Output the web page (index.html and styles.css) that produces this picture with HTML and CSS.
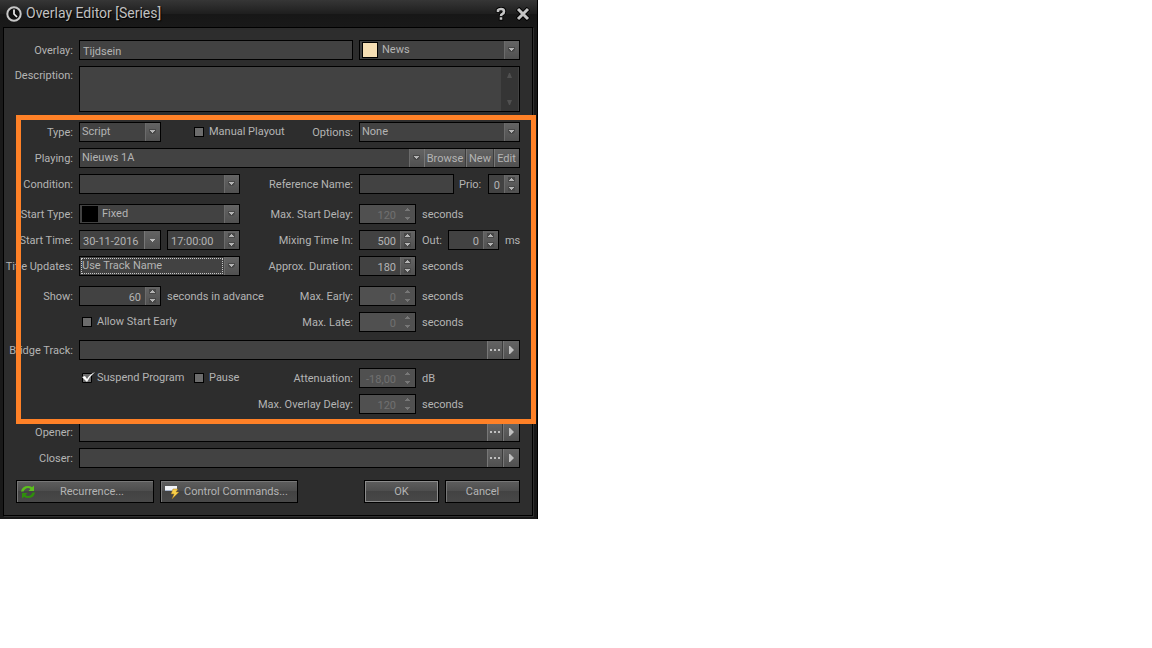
FILE: index.html
```html
<!DOCTYPE html>
<html lang="en">
<head>
  <meta charset="UTF-8">
  <meta name="viewport" content="width=device-width, initial-scale=1.0">
  <title>Overlay Editor</title>
  <link rel="stylesheet" href="styles.css">
</head>
<body>

  <!-- Shared arrow shapes -->
  <svg class="defs" width="0" height="0">
    <symbol id="up" viewBox="0 0 5 3"><path d="M2 0h1v1h1v1h1v1H0V2h1V1h1z"/></symbol>
    <symbol id="down" viewBox="0 0 5 3"><path d="M0 0h5v1H4v1H3v1H2V2H1V1H0z"/></symbol>
    <symbol id="play" viewBox="0 0 5 8"><path d="M0 0h1l4 4-4 4H0z"/></symbol>
    <symbol id="dots" viewBox="0 0 10 2"><path d="M0 0h2v2H0zM4 0h2v2H4zM8 0h2v2H8z"/></symbol>
  </svg>

  <main class="dialog">
    <header class="titlebar">
      <svg class="clock" viewBox="0 0 16 16">
        <circle cx="8" cy="8" r="6.7" fill="#101010" stroke="#c8c8c8" stroke-width="2"/>
        <path d="M8 3.500V8l3 3" fill="none" stroke="#eee" stroke-width="1.700"/>
      </svg>
      <h1>Overlay Editor [Series]</h1>
      <button type="button" class="title-btn" aria-label="Help">
        <svg width="12" height="14" viewBox="0 0 12 14">
          <path d="M3 5.500V3.200Q4 2 6 2q3 0 3 2.400 0 1.500-1.600 2.400Q6 7.500 6 9M6 10v3.500" fill="none" stroke="#000" stroke-width="4.500"/>
          <path d="M3 5V3.200Q4 2 6 2q3 0 3 2.400 0 1.500-1.600 2.400Q6 7.500 6 9M6 10.300v2.500" fill="none" stroke="#c4c4c4" stroke-width="2.600"/>
        </svg>
      </button>
      <button type="button" class="title-btn" aria-label="Close">
        <svg width="14" height="14" viewBox="0 0 14 14">
          <path d="M1.500 1.500l11 11M12.500 1.500l-11 11" stroke="#000" stroke-width="5"/>
          <path d="M2 2l10 10M12 2l-10 10" stroke="#c4c4c4" stroke-width="3"/>
        </svg>
      </button>
    </header>

    <form class="panel">
      <!-- General -->
      <div class="row">
        <label for="overlay">Overlay:</label>
        <input class="box wide" id="overlay" type="text" value="Tijdsein">
        <span class="box combo">
          <i class="swatch news"></i>
          <select aria-label="Category"><option>News</option></select>
        </span>
      </div>
      <div class="row tall">
        <label for="description">Description:</label>
        <div class="box memo full">
          <textarea id="description"></textarea>
          <span class="scroll">
            <svg width="5" height="5" viewBox="0 0 5 5"><path d="M2 0h1l2 5H0z"/></svg>
            <svg width="5" height="5" viewBox="0 0 5 5"><path d="M0 0h5L3 5H2z"/></svg>
          </span>
        </div>
      </div>

      <!-- Playout settings -->
      <section class="settings">
        <div class="row">
          <label for="type">Type:</label>
          <div class="group wide">
            <span class="box combo short"><select id="type"><option>Script</option></select></span>
            <label class="check second"><input type="checkbox">Manual Playout</label>
            <label class="push" for="options">Options:</label>
          </div>
          <span class="box combo"><select id="options"><option>None</option></select></span>
        </div>
        <div class="row">
          <label for="playing">Playing:</label>
          <div class="box full">
            <select id="playing"><option>Nieuws 1A</option></select>
            <button type="button" class="inner text browse">Browse</button>
            <button type="button" class="inner text new">New</button>
            <button type="button" class="inner text edit">Edit</button>
          </div>
        </div>
        <div class="row space-10">
          <label for="condition">Condition:</label>
          <span class="box combo"><select id="condition"><option></option></select></span>
          <label for="refname">Reference Name:</label>
          <div class="group">
            <input class="box grow" id="refname" type="text">
            <label class="prio" for="prio">Prio:</label>
            <span class="box spin s-prio"><input id="prio" type="text" value="0"><span class="arrows"><button type="button" aria-label="Up"><svg><use href="#up"/></svg></button><button type="button" aria-label="Down"><svg><use href="#down"/></svg></button></span></span>
          </div>
        </div>
        <div class="row">
          <label for="starttype">Start Type:</label>
          <span class="box combo">
            <i class="swatch"></i>
            <select id="starttype"><option>Fixed</option></select>
          </span>
          <label for="startdelay">Max. Start Delay:</label>
          <div class="group">
            <span class="box spin off"><input id="startdelay" type="text" value="120" disabled><span class="arrows"><button type="button" disabled aria-label="Up"><svg><use href="#up"/></svg></button><button type="button" disabled aria-label="Down"><svg><use href="#down"/></svg></button></span></span>
            <span>seconds</span>
          </div>
        </div>
        <div class="row">
          <label for="startdate">Start Time:</label>
          <div class="group">
            <span class="box short"><input id="startdate" type="text" value="30-11-2016"><button type="button" class="inner" aria-label="Pick date"><svg class="drop"><use href="#down"/></svg></button></span>
            <span class="box spin time"><input aria-label="Start time" type="text" value="17:00:00"><span class="arrows"><button type="button" aria-label="Up"><svg><use href="#up"/></svg></button><button type="button" aria-label="Down"><svg><use href="#down"/></svg></button></span></span>
          </div>
          <label for="mixin">Mixing Time In:</label>
          <div class="group">
            <span class="box spin"><input id="mixin" type="text" value="500"><span class="arrows"><button type="button" aria-label="Up"><svg><use href="#up"/></svg></button><button type="button" aria-label="Down"><svg><use href="#down"/></svg></button></span></span>
            <label class="out" for="mixout">Out:</label>
            <span class="box spin s-out"><input id="mixout" type="text" value="0"><span class="arrows"><button type="button" aria-label="Up"><svg><use href="#up"/></svg></button><button type="button" aria-label="Down"><svg><use href="#down"/></svg></button></span></span>
            <span>ms</span>
          </div>
        </div>
        <div class="row space-10">
          <label for="titleupdates">Title Updates:</label>
          <span class="box combo focused"><select id="titleupdates"><option>Use Track Name</option></select></span>
          <label for="duration">Approx. Duration:</label>
          <div class="group">
            <span class="box spin"><input id="duration" type="text" value="180"><span class="arrows"><button type="button" aria-label="Up"><svg><use href="#up"/></svg></button><button type="button" aria-label="Down"><svg><use href="#down"/></svg></button></span></span>
            <span>seconds</span>
          </div>
        </div>
        <div class="row">
          <label for="show">Show:</label>
          <div class="group">
            <span class="box spin short"><input id="show" type="text" value="60"><span class="arrows"><button type="button" aria-label="Up"><svg><use href="#up"/></svg></button><button type="button" aria-label="Down"><svg><use href="#down"/></svg></button></span></span>
            <span>seconds in advance</span>
          </div>
          <label for="early">Max. Early:</label>
          <div class="group">
            <span class="box spin off"><input id="early" type="text" value="0" disabled><span class="arrows"><button type="button" disabled aria-label="Up"><svg><use href="#up"/></svg></button><button type="button" disabled aria-label="Down"><svg><use href="#down"/></svg></button></span></span>
            <span>seconds</span>
          </div>
        </div>
        <div class="row space-8">
          <label class="check first"><input type="checkbox">Allow Start Early</label>
          <label for="late">Max. Late:</label>
          <div class="group">
            <span class="box spin off"><input id="late" type="text" value="0" disabled><span class="arrows"><button type="button" disabled aria-label="Up"><svg><use href="#up"/></svg></button><button type="button" disabled aria-label="Down"><svg><use href="#down"/></svg></button></span></span>
            <span>seconds</span>
          </div>
        </div>
        <div class="row space-8">
          <label for="bridge">Bridge Track:</label>
          <div class="box full">
            <input id="bridge" type="text">
            <button type="button" class="inner" aria-label="Choose file"><svg class="dots"><use href="#dots"/></svg></button>
            <button type="button" class="inner" aria-label="Play"><svg class="play"><use href="#play"/></svg></button>
          </div>
        </div>
        <div class="row">
          <div class="group checks">
            <label class="check suspend"><input type="checkbox" checked>Suspend Program</label>
            <label class="check"><input type="checkbox">Pause</label>
            <label class="push" for="attenuation">Attenuation:</label>
          </div>
          <div class="group">
            <span class="box spin off"><input id="attenuation" type="text" value="-18,00" disabled><span class="arrows"><button type="button" disabled aria-label="Up"><svg><use href="#up"/></svg></button><button type="button" disabled aria-label="Down"><svg><use href="#down"/></svg></button></span></span>
            <span>dB</span>
          </div>
        </div>
        <div class="row">
          <label class="span-left" for="overlaydelay">Max. Overlay Delay:</label>
          <div class="group">
            <span class="box spin off"><input id="overlaydelay" type="text" value="120" disabled><span class="arrows"><button type="button" disabled aria-label="Up"><svg><use href="#up"/></svg></button><button type="button" disabled aria-label="Down"><svg><use href="#down"/></svg></button></span></span>
            <span>seconds</span>
          </div>
        </div>
      </section>

      <!-- Opener / closer -->
      <div class="row">
        <label for="opener">Opener:</label>
        <div class="box full">
          <input id="opener" type="text">
          <button type="button" class="inner" aria-label="Choose file"><svg class="dots"><use href="#dots"/></svg></button>
          <button type="button" class="inner" aria-label="Play"><svg class="play"><use href="#play"/></svg></button>
        </div>
      </div>
      <div class="row">
        <label for="closer">Closer:</label>
        <div class="box full">
          <input id="closer" type="text">
          <button type="button" class="inner" aria-label="Choose file"><svg class="dots"><use href="#dots"/></svg></button>
          <button type="button" class="inner" aria-label="Play"><svg class="play"><use href="#play"/></svg></button>
        </div>
      </div>

      <footer class="actions">
        <button type="button" class="btn icon-btn">
          <svg width="14" height="14" viewBox="0 0 14 14">
            <path d="M0 6.500Q1 1 7 1q2.500 0 4 1.300L13 .5V6H7.500l2-2Q8.500 3 7 3 4 3 2.500 6.500z" fill="#5cc01c"/>
            <path d="M14 7.500Q13 13 7 13q-2.500 0-4-1.300L1 13.500V8h5.500l-2 2Q5.500 11 7 11q3 0 4.500-3.500z" fill="#2f8e0c"/>
          </svg>
          <span>Recurrence...</span>
        </button>
        <button type="button" class="btn icon-btn">
          <svg width="14" height="14" viewBox="0 0 14 14">
            <path d="M0 1h12v5H0z" fill="#f2f4f8"/>
            <path d="M0 5h7v1H0z" fill="#a9b6cc"/>
            <path d="M8 4h5l-2 3h3l-7 7 2-5H6z" fill="#f8cf4a" stroke="#9b6c1c" stroke-width=".5"/>
          </svg>
          <span>Control Commands...</span>
        </button>
        <button type="button" class="btn ok">OK</button>
        <button type="button" class="btn">Cancel</button>
      </footer>
    </form>
  </main>

</body>
</html>
```
FILE: styles.css
```css
*,
*::before,
*::after {
  box-sizing: border-box;
}

body {
  margin: 0;
  background: #fff;
  color: #b4b4b4;
  font: 11px/18px Roboto, Tahoma, sans-serif;
}

.defs {
  position: absolute;
}

.dialog {
  max-width: 538px;
  padding: 0 4px 3px 3px;
  background: #191919;
  border-right: 1px solid #000;
}

/* Title bar */
.titlebar {
  display: flex;
  align-items: center;
  height: 27px;
  margin: 0 -4px 0 -3px;
  padding: 0 7px 0 6px;
  background: linear-gradient(#363636, #1e1e1e 14px, #171717 14px, #191919);
}

.clock {
  width: 16px;
  height: 16px;
  margin-right: 4px;
}

h1 {
  flex: 1;
  margin: 0;
  padding-bottom: 2px;
  color: #c0c0c0;
  font-size: 14px;
  font-weight: normal;
  text-shadow: 1px 1px 1px #000;
}

.title-btn {
  display: flex;
  justify-content: center;
  width: 14px;
  margin-left: 8px;
  padding: 0;
  border: 0;
  background: none;
}

/* Form */
.panel {
  padding: 12px 12px 12px 0;
  background: #2d2d2d;
  border: 1px solid #000;
  box-shadow: 1px 1px 0 #303030;
}

.row {
  display: grid;
  grid-template-columns: 69px minmax(0, 161fr) minmax(0, 107fr) minmax(0, 161fr);
  column-gap: 6px;
  height: 20px;
  margin-bottom: 6px;
  line-height: 22px;
  white-space: nowrap;
}

.row > label {
  justify-self: end;
}

.tall {
  height: 46px;
  margin-bottom: 10px;
  line-height: 20px;
}

.space-8 {
  margin-bottom: 8px;
}

.space-10 {
  margin-bottom: 10px;
}

.wide {
  grid-column: 2 / 4;
}

.full {
  grid-column: 2 / 5;
}

.span-left {
  grid-column: 1 / 4;
}

.checks {
  grid-column: 1 / 4;
  padding-left: 78px;
}

.group {
  display: flex;
  gap: 6px;
  height: 20px;
}

.push {
  margin-left: auto;
}

.grow {
  flex: 1;
}

/* Highlight around the playout settings */
.settings {
  position: relative;
  margin-bottom: 8px;
}

.settings::after {
  content: "";
  position: absolute;
  inset: -7px -16px -10px 12px;
  border: 5px solid #ff8127;
  pointer-events: none;
}

.settings .row:last-child {
  margin-bottom: 0;
}

/* Fields */
.box {
  display: flex;
  min-width: 0;
  height: 20px;
  background: #424242;
  border: 1px solid #000;
}

input,
select,
textarea,
button {
  min-width: 0;
  color: inherit;
  font: inherit;
}

input,
select,
textarea {
  flex: 1;
  margin: 0;
  padding: 0 2px;
  border: 0;
  border-radius: 0;
  outline: 0;
  background: none;
}

input[type="text"] {
  height: 18px;
  padding: 2px 3px 0;
  line-height: 16px;
}

input[type="text"].box {
  height: 20px;
  background: #424242;
  border: 1px solid #000;
}

select {
  height: 18px;
  appearance: none;
  line-height: 18px;
  background:
    url("data:image/svg+xml,%3Csvg xmlns='http://www.w3.org/2000/svg' width='15' height='18'%3E%3Cpath d='M4 6h7v3l-2 2H6L4 9z' fill='%23484848'/%3E%3Cpath d='M5 7h5v1H9v1H8v1H7V9H6V8H5z' fill='%23b4b4b4'/%3E%3C/svg%3E") right center no-repeat,
    linear-gradient(90deg, #6b6b6b 1px, transparent 1px) right / 15px 18px no-repeat,
    linear-gradient(#646464, #505050) right / 15px 18px no-repeat;
}

.focused::before {
  content: "";
  width: 142px;
  height: 16px;
  margin: 1px -143px 1px 1px;
  border: 1px dotted #c8c8c8;
}

.swatch {
  width: 16px;
  height: 16px;
  margin: 1px 2px;
  background: #000;
  border: 1px solid #000;
}

.news {
  background: #f5deb3;
}

.memo {
  height: 46px;
}

textarea {
  resize: none;
}

.scroll {
  display: flex;
  flex-direction: column;
  justify-content: space-between;
  align-items: center;
  width: 17px;
  margin-right: 1px;
  padding: 6px 0;
  background: #353535;
  fill: #505050;
}

.spin {
  flex: none;
  width: 57px;
}

.spin input[type="text"] {
  width: 0;
  padding-right: 4px;
  text-align: right;
}

.short {
  flex: none;
  width: 82px;
}

.time {
  width: 73px;
}

.time input[type="text"] {
  padding-right: 0;
  text-align: left;
}

.s-prio {
  width: 32px;
}

.s-out {
  width: 51px;
}

.prio {
  width: 22px;
  margin: 0 1px 0 -1px;
}

.out {
  width: 22px;
}

.arrows {
  display: flex;
  flex-direction: column;
  width: 15px;
  padding-right: 1px;
  background: linear-gradient(#646464, #505050);
  border-left: 1px solid #6b6b6b;
}

.arrows button {
  display: flex;
  flex: 1;
  justify-content: center;
  align-items: center;
  padding: 0;
  border: 0;
  background: none;
}

.arrows svg {
  width: 7px;
  height: 5px;
  padding: 1px;
  background: #484848;
  fill: #b4b4b4;
}

.off {
  background: #505050;
  color: #707070;
}

.off .arrows {
  background: none;
  border-color: transparent;
}

.off .arrows svg {
  background: none;
  fill: #777;
}

.inner {
  display: flex;
  justify-content: center;
  align-items: center;
  width: 16px;
  padding: 0 1px 0 0;
  border: 0;
  border-left: 1px solid #777;
  background: linear-gradient(#646464, #505050);
  fill: #c0c0c0;
}

.inner + .inner {
  box-shadow: -1px 0 0 #3c3c3c;
}

.text {
  line-height: 20px;
  padding-top: 2px;
}

.browse {
  width: 42px;
}

.new {
  width: 28px;
}

.edit {
  width: 25px;
}

.drop {
  width: 5px;
  height: 3px;
}

.dots {
  width: 10px;
  height: 2px;
}

.play {
  width: 5px;
  height: 8px;
}

/* Check boxes */
.check {
  display: flex;
  align-items: center;
  gap: 5px;
  height: 20px;
}

.check input {
  flex: none;
  appearance: none;
  width: 10px;
  height: 10px;
  background: #6c6c6c;
  border: 1px solid #000;
}

.check input:checked {
  width: 14px;
  height: 12px;
  margin-right: -4px;
  border: 0;
  background:
    url("data:image/svg+xml,%3Csvg xmlns='http://www.w3.org/2000/svg' width='14' height='12'%3E%3Cpath d='M.5 1.500h9v9h-9z' fill='%236c6c6c' stroke='%23000'/%3E%3Cpath d='M0 5l3-1 2 3Q8 2 13 0 8 4 5 10z' fill='%23fff'/%3E%3C/svg%3E") no-repeat;
}

.second {
  margin-left: 27px;
}

.row > .first {
  grid-column: 1 / 3;
  justify-self: start;
  padding-left: 78px;
}

.suspend {
  width: 106px;
}

/* Buttons */
.actions {
  display: flex;
  gap: 6px;
  margin-top: 12px;
  padding-left: 12px;
}

.btn {
  width: 75px;
  height: 23px;
  padding: 1px 0 0;
  border: 1px solid #000;
  background: linear-gradient(#5e5e5e, #4d4d4d 50%, #434343 50%, #484848);
  box-shadow: inset 1px 1px 0 #777;
}

.icon-btn {
  display: flex;
  align-items: center;
  width: 138px;
  padding: 0 4px;
}

.icon-btn span {
  flex: 1;
}

.ok {
  margin-left: auto;
  box-shadow: inset 0 0 0 1px #8c8c8c;
}
```
